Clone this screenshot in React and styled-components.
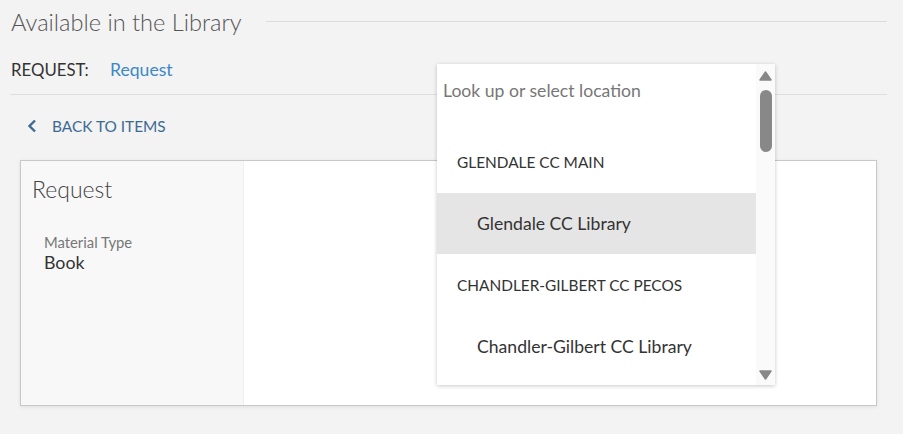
import React from "react";
import styled, { createGlobalStyle } from "styled-components";

const Global = createGlobalStyle`
  html, body { margin: 0; padding: 0; background: #f3f3f3; }
  body { font-family: Lato, "Noto Sans", sans-serif; color: #333; }
  * { box-sizing: border-box; }
`;

const Page = styled.div`
  position: relative;
  width: 903px;
  height: 434px;
  padding: 0 16px 0 10px;
  overflow: hidden;
`;

const TitleRow = styled.div`
  display: flex;
  align-items: center;
  gap: 24px;
  height: 44px;
  padding-left: 1px;
`;

const Title = styled.h2`
  margin: 0;
  font-size: 23.6px;
  font-weight: 300;
  color: #555;
  white-space: nowrap;
`;

const Rule = styled.div`
  flex: 1;
  height: 1px;
  background: #dcdcdc;
  margin-top: -2px;
`;

const RequestRow = styled.div`
  display: flex;
  align-items: center;
  height: 51px;
  padding-left: 1px;
  border-bottom: 1px solid #dedede;
`;

const Label = styled.span`
  color: #333;
  font-size: 16.8px;
  width: 99px;
`;

const Link = styled.a`
  color: #3c88c8;
  font-size: 17.6px;
  text-decoration: none;
`;

const Back = styled.div`
  display: flex;
  align-items: center;
  gap: 15px;
  height: 63px;
  padding-left: 17px;
  padding-bottom: 1px;
  color: #3d6a93;
  font-size: 15.4px;
  margin-bottom: 2px;
`;

const Card = styled.div`
  margin: 0 10px;
  height: 246px;
  display: flex;
  background: #fff;
  border: 1px solid #c8c8c8;
  box-shadow: 0 1px 4px rgba(0, 0, 0, 0.08);
`;

const Side = styled.div`
  width: 223px;
  background: #f8f8f8;
  border-right: 1px solid #f0f0f0;
  padding: 14px 11px;
`;

const SideTitle = styled.h3`
  margin: 0 0 30px;
  font-size: 23px;
  font-weight: 300;
  color: #444;
`;

const Field = styled.div`
  padding-left: 12px;
`;

const FieldLabel = styled.div`
  font-size: 14.8px;
  color: #777;
  line-height: 19px;
`;

const FieldValue = styled.div`
  font-size: 17.8px;
  color: #333;
  line-height: 21px;
`;

const Dropdown = styled.div`
  position: absolute;
  left: 437px;
  top: 64px;
  width: 338px;
  height: 321px;
  background: #fff;
  box-shadow: 0 1px 4px rgba(0, 0, 0, 0.22);
  display: flex;
`;

const List = styled.div`
  flex: 1;
  display: flex;
  flex-direction: column;
`;

const Search = styled.div`
  height: 67px;
  padding: 16px 6px 0;
  font-size: 17.6px;
  color: #777;
`;

const Option = styled.div`
  height: ${(p) => (p.$group ? 62 : 61)}px;
  display: flex;
  align-items: center;
  padding-left: ${(p) => (p.$group ? 20 : 40)}px;
  font-size: ${(p) => (p.$group ? 15.4 : 17.6)}px;
  color: #333;
  background: ${(p) => (p.$active ? "#e5e5e5" : "transparent")};
`;

const Scrollbar = styled.div`
  width: 19px;
  background: #fafafa;
  display: flex;
  flex-direction: column;
  align-items: center;
  padding-top: 7px;
`;

const Thumb = styled.div`
  width: 12px;
  height: 62px;
  border-radius: 6px;
  background: #888;
  margin-top: 9px;
`;

const Spacer = styled.div`
  flex: 1;
`;

const Arrow = ({ down }) => (
  <svg width="13" height="10" viewBox="0 0 13 10" style={{ display: "block", marginBottom: down ? 5 : 0 }}>
    <path
      d={down ? "M1 1 L12 1 L6.5 9 Z" : "M6.5 1 L12 9 L1 9 Z"}
      fill="#888"
      stroke="#888"
      strokeWidth="1.5"
      strokeLinejoin="round"
    />
  </svg>
);

export default function App() {
  return (
    <>
      <Global />
      <Page>
        <TitleRow>
          <Title>Available in the Library</Title>
          <Rule />
        </TitleRow>
        <RequestRow>
          <Label>REQUEST:</Label>
          <Link href="#">Request</Link>
        </RequestRow>
        <Back>
          <svg width="10" height="14" viewBox="0 0 10 14">
            <path d="M8 1.5 L2.5 7 L8 12.5" fill="none" stroke="#3d6a93" strokeWidth="2.4" />
          </svg>
          <span>BACK TO ITEMS</span>
        </Back>
        <Card>
          <Side>
            <SideTitle>Request</SideTitle>
            <Field>
              <FieldLabel>Material Type</FieldLabel>
              <FieldValue>Book</FieldValue>
            </Field>
          </Side>
        </Card>
        <Dropdown>
          <List>
            <Search>Look up or select location</Search>
            <Option $group>GLENDALE CC MAIN</Option>
            <Option $active>Glendale CC Library</Option>
            <Option $group>CHANDLER-GILBERT CC PECOS</Option>
            <Option>Chandler-Gilbert CC Library</Option>
          </List>
          <Scrollbar>
            <Arrow />
            <Thumb />
            <Spacer />
            <Arrow down />
          </Scrollbar>
        </Dropdown>
      </Page>
    </>
  );
}
